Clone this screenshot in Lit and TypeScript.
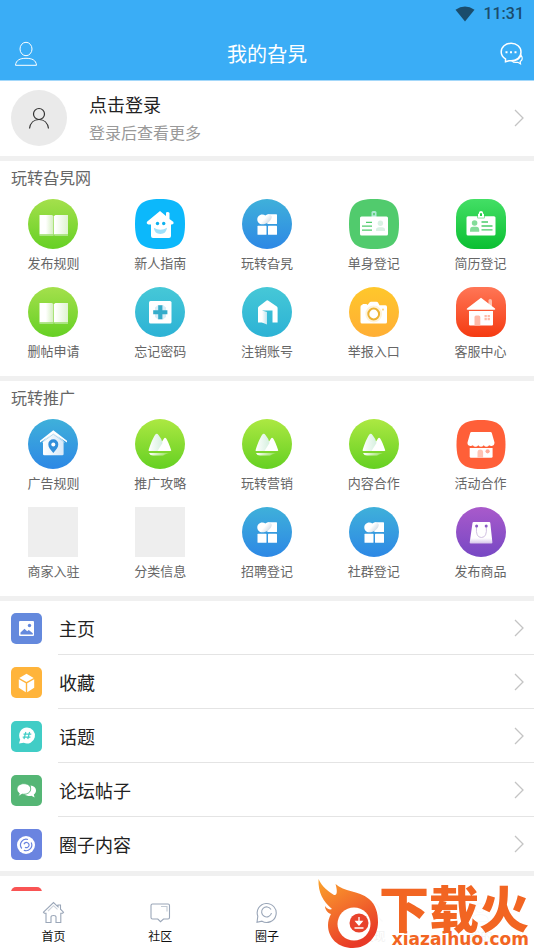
import { LitElement, html, css, svg } from "lit";
import { customElement, property } from "lit/decorators.js";

type Entry = { icon: string; label: string };

const tops: Entry[] = [
  { icon: "book", label: "发布规则" },
  { icon: "smile", label: "新人指南" },
  { icon: "tiles", label: "玩转旮旯" },
  { icon: "card", label: "单身登记" },
  { icon: "resume", label: "简历登记" },
  { icon: "book", label: "删帖申请" },
  { icon: "plus", label: "忘记密码" },
  { icon: "door", label: "注销账号" },
  { icon: "camera", label: "举报入口" },
  { icon: "cottage", label: "客服中心" },
];

const promos: Entry[] = [
  { icon: "pin", label: "广告规则" },
  { icon: "hills", label: "推广攻略" },
  { icon: "hills", label: "玩转营销" },
  { icon: "hills", label: "内容合作" },
  { icon: "shop", label: "活动合作" },
  { icon: "blank", label: "商家入驻" },
  { icon: "blank", label: "分类信息" },
  { icon: "tiles", label: "招聘登记" },
  { icon: "tiles", label: "社群登记" },
  { icon: "bag", label: "发布商品" },
];

const rows: Entry[] = [
  { icon: "picture", label: "主页" },
  { icon: "box", label: "收藏" },
  { icon: "topic", label: "话题" },
  { icon: "posts", label: "论坛帖子" },
  { icon: "circle", label: "圈子内容" },
];

const tabs: Entry[] = [
  { icon: "home", label: "首页" },
  { icon: "talk", label: "社区" },
  { icon: "ring", label: "圈子" },
  { icon: "find", label: "发现" },
  { icon: "me", label: "我的" },
];

const gradient = (id: string, from: string, to: string, flat = false) => svg`
  <linearGradient id=${id} x1="0" y1="0" x2=${flat ? 1 : 0} y2=${flat ? 0 : 1}>
    <stop offset="0" stop-color=${from}/><stop offset="1" stop-color=${to}/>
  </linearGradient>`;

const disc = svg`<circle cx="25" cy="25" r="25" fill="url(#bg)"/>`;
const squircle = svg`<path d="M25 0C44 0 50 6 50 25S44 50 25 50 0 44 0 25 6 0 25 0Z" fill="url(#bg)"/>`;
const softSquare = svg`<rect width="50" height="50" rx="18" fill="url(#bg)"/>`;

const badges: Record<string, unknown> = {
  blank: svg`<rect width="50" height="50" fill="#eee"/>`,
  book: svg`<defs>${gradient("bg", "#a4e04c", "#66d024")}
      <linearGradient id="l"><stop offset=".45" stop-color="#fff"/><stop offset="1" stop-color="#d3efbd"/></linearGradient>
      <linearGradient id="r"><stop offset=".1" stop-color="#fff"/><stop offset="1" stop-color="#dff3d0"/></linearGradient></defs>${disc}
    <path d="M11.500 16H24l1.500 1v18.500H11.500Z" fill="url(#l)"/>
    <path d="M26 17l1.500-1H40v19.500H26Z" fill="url(#r)"/>
    <path d="M11.500 35.500H40V37H27l-1-.7-1 .7H11.500Z" fill="#a9e481"/>`,
  smile: svg`<defs>${gradient("bg", "#0cb8fb", "#0cb8fb")}</defs>${squircle}
    <path d="M25 12 31 17V14q0-1 1.500-1T34.500 14v6L38.500 23q.7 2-1.500 2.500H36V37q0 2-2 2H18q-2 0-2-2V25.500H13.500Q11 25 12 22.800Z" fill="#fff"/>
    <circle cx="22.500" cy="24.500" r="1.700" fill="#0cb1ee"/><circle cx="28.700" cy="24.500" r="1.700" fill="#0cb1ee"/>
    <path d="M18.800 28.800q6.700 4 13.200 0-.7 6.200-6.600 6.200t-6.600-6.200Z" fill="#9fe0fa"/>`,
  tiles: svg`<defs>${gradient("bg", "#3fb0da", "#2d88e5")}
      <linearGradient id="h" x2="1" y2=".6"><stop offset=".55" stop-color="#fff"/><stop offset="1" stop-color="#ccd9e4"/></linearGradient></defs>${disc}
    <rect x="25.300" y="15.300" width="9.700" height="9.700" rx=".6" fill="#fff"/>
    <path d="M20.300 25.300c-3 0-5-2.200-5-4.800s2-5 5-5q2 0 3 1 1-1 3-1 3 0 3.500 2c0 4-5 7.800-9.500 7.800Z" fill="url(#h)"/>
    <rect x="15.500" y="26.800" width="9" height="9" rx=".6" fill="#fff"/><rect x="26" y="26.800" width="9" height="9" rx=".6" fill="#fff"/>`,
  card: svg`<defs>${gradient("bg", "#51cb6d", "#51cb6d")}</defs>${squircle}
    <path d="M22.500 18v-4.500q0-1.500 1.500-1.500h2q1.500 0 1.500 1.500V18Z" fill="#aee8d3"/><rect x="24.200" y="14" width="1.600" height="2.200" fill="#51cb6d"/>
    <rect x="11" y="17.500" width="28" height="19" rx="1.500" fill="#fff"/>
    <path d="M17 23.300h6M13 27.200h10M13 31.200h10" stroke="#51cb6d" stroke-width="1.300"/>
    <circle cx="31.400" cy="24.200" r="2.700" fill="#daf1e4"/><path d="M27 32v-1.200q0-2.600 3-2.600h3q3 0 3 2.600V32Z" fill="#daf1e4"/>`,
  resume: svg`<defs>${gradient("bg", "#43df65", "#0bbf32")}</defs>${softSquare}
    <rect x="10.500" y="17.300" width="29" height="19.200" rx="1.500" fill="#fff"/>
    <path d="M21.500 17h7v2.300h-7Z" fill="#24cf4a"/><path d="M22 18.700v-4h1V13.500q0-1.500 2-1.500t2 1.500v1.200h1v4Z" fill="#fff"/><path d="M24 17v-2.500q1-1.200 2 0V17Z" fill="#24cf4a"/>
    <circle cx="18.600" cy="24" r="2.800" fill="#83dc99"/><path d="M14 32.700v-1.500q0-3.400 3-3.400h3.200q3 0 3 3.400v1.500Z" fill="#83dc99"/>
    <path d="M25.500 23h6.500M25.500 27h11M25.500 30.800h11" stroke="#4bcd6b" stroke-width="1.300"/>`,
  plus: svg`<defs>${gradient("bg", "#46c8d7", "#2cb2d5")}</defs>${disc}
    <rect x="14" y="14" width="22.500" height="22.500" rx="1.500" fill="#fff"/>
    <path d="M20 20.500l3-2.500h5l3 2.500v9.500l-3 2.500h-5l-3-2.500Z" fill="#d9edf6"/>
    <path d="M23.200 18.300h4.200v5h5v4h-5v5h-4.200v-5h-5v-4h5Z" fill="#35acca"/>`,
  door: svg`<defs>${gradient("bg", "#46c8d7", "#2cb2d5")}${gradient("d", "#fff", "#bfe6f0", true)}</defs>${disc}
    <path d="M16 21q0-1 .8-1.500L24.600 13.500q.7-.5 1.400 0L34.800 19.500q.8.500.8 1.500V35.500H30.500V23.500H20.500V35.500H16Z" fill="#fff"/>
    <path d="M20 23.500 25 25V37.500L20 35.500Z" fill="url(#d)"/>`,
  camera: svg`<defs>${gradient("bg", "#ffc72b", "#ffae35")}</defs>${disc}
    <path d="M11.500 20q0-2 1.500-2l1-1h3.500l1 1 2-2.500q.5-.7 1.500-.7h5.500q1 0 1.500.7L30.500 18.300H36.500Q38 18.300 38 20v15q0 1.500-1.500 1.500h-23.500q-1.500 0-1.500-1.500Z" fill="#fff"/>
    <circle cx="24.700" cy="27" r="8.400" fill="#fff3d8"/><circle cx="24.700" cy="27" r="5.400" fill="#fff" stroke="#ecb334" stroke-width="2"/><circle cx="34" cy="22.600" r="1.100" fill="#ffd783"/>`,
  cottage: svg`<defs>${gradient("bg", "#ff7656", "#f53a11")}</defs>${softSquare}
    <path d="M32.500 20v-6.500q0-1.500 1.700-1.500t1.800 1.500V20Z" fill="#ffbfae"/>
    <path d="M25 10.700 39 21.500q.8 1-.5 1.200h-27q-1.500-.2-.5-1.200ZM13 24h24v13.500q0 1-1 1H14q-1 0-1-1Z" fill="#fff"/>
    <path d="M18.500 38.500V30q0-1.500 1.500-1.500h2.800q1.500 0 1.500 1.500v8.500ZM28.500 28h2.300v2.300h-2.300zM31.600 28h2.300v2.300h-2.300zM28.500 31h2.300v2.300h-2.300zM31.600 31h2.300v2.300h-2.300z" fill="#ffbaa8"/>`,
  pin: svg`<defs>${gradient("bg", "#3fb0da", "#2d88e5")}${gradient("s", "#fff", "#d8e9f8", true)}</defs>${disc}
    <path d="M15 22 25.300 13.500 35.600 22V35q0 1.300-1.300 1.300H16.300Q15 36.300 15 35Z" fill="url(#s)"/>
    <path d="M12 21.800 25.300 11.200 39 21.800v1.700L25.300 14.500 12 23.500Z" fill="#fff"/><path d="M14 23.500 25.300 15.200l11.300 8.300" fill="none" stroke="#a9d4ee" stroke-width=".8"/>
    <path d="M25.300 34c-3-3.500-5-5.700-5-8.700a5 5 0 0 1 10 0c0 3-2 5.200-5 8.700Z" fill="#328fdb"/><circle cx="25.300" cy="25.500" r="2" fill="#fff"/>`,
  hills: svg`<defs>${gradient("bg", "#ace842", "#65d022")}${gradient("m", "#fff", "#d6f0df", true)}${gradient("w", "#fff", "#93df55", true)}</defs>${disc}
    <path d="M25.500 25 29 19.500q1-1.500 2.200 0Q33 22 36.300 31.500L35.500 32H21Z" fill="#fff"/>
    <path d="M13.500 31.500C15 26 18 19 20 16q1.800-2.500 3.500 0Q27 20 27.500 24L22.500 32H14Z" fill="url(#m)"/>
    <path d="M14 34h20l-3.500 1.300L28 36.600H18q-3 0-4-2.600Z" fill="url(#w)"/>`,
  shop: svg`<path d="M25 1C43 1 49.500 7 49.500 25.500S43 50 25 50 .500 44 .500 25.500 7 1 25 1Z" fill="#ff5f38"/>
    <path d="M15.500 13h19q1 0 1.300 1L38.500 23.500q0 3-2.700 3.500-1.600.2-2.600-.7-1.300 1.500-2.800 1.500t-2.700-1.500q-1.200 1.500-2.700 1.500t-2.700-1.500q-1.200 1.500-2.800 1.500t-2.700-1.500q-1 .9-2.600.7-3-.5-2.700-3.500L14.200 14q.3-1 1.300-1Z" fill="#fff"/>
    <path d="M13.700 29h22.900V37.500q0 1.300-1.300 1.300H15q-1.300 0-1.300-1.300Z" fill="#fff"/>
    <path d="M21.500 38.800V33.500q0-3 2.800-3t2.800 3v5.300Z" fill="#ffc3b4"/><circle cx="31.600" cy="32.300" r="2.100" fill="#ffab98"/>`,
  bag: svg`<defs>${gradient("bg", "#a95acb", "#7748c4")}
      <linearGradient id="b" x2="0" y2="1"><stop offset=".75" stop-color="#fff"/><stop offset="1" stop-color="#d5c3ea"/></linearGradient></defs>${disc}
    <path d="M17.700 15H33.200q1 0 1.100 1L36.400 35.500q0 1-1 1H14.700q-1.100 0-1-1L16.500 16q.1-1 1.200-1Z" fill="url(#b)"/>
    <path d="M20.500 20q-1 10.500 4.900 10.500T30.300 20" fill="none" stroke="#cbb9dc" stroke-width=".9"/>
    <circle cx="20.600" cy="19" r="1.500" fill="#8a5ac4"/><circle cx="30.200" cy="19" r="1.500" fill="#8a5ac4"/>`,
};

const rowIcons: Record<string, unknown> = {
  picture: svg`<rect width="31" height="31" rx="5" fill="#6489dd"/><rect x="8" y="8" width="15" height="15" rx="1" fill="#fff"/>
    <circle cx="18.500" cy="12.500" r="1.700" fill="#6489dd"/><path d="M9.500 21.500v-2l4-3.800 2.700 2.500 1.600-1.200 4 3.200v1.300Z" fill="#6489dd"/>`,
  box: svg`<rect width="31" height="31" rx="5" fill="#ffb43b"/><path d="M15.500 6.800 22.700 11 15.500 15 8.300 11ZM7.800 12.200l7 4v9l-7-4.500ZM23.200 12.200l-7 4v9l7-4.500Z" fill="#fff"/>`,
  topic: svg`<rect width="31" height="31" rx="5" fill="#41cdc6"/><path d="M16 6.500a8 8 0 1 1-3.300 15.300L8 22.500l1.200-4A8 8 0 0 1 16 6.500Z" fill="#fff"/>
    <path d="M14.800 11 13 18.200M18.600 11l-1.800 7.200M12.500 13.200h7.800M11.700 16.200h7.700" stroke="#41cdc6" stroke-width="1.200" fill="none"/>`,
  posts: svg`<rect width="31" height="31" rx="5" fill="#55b675"/><path d="M19.500 10.500c3.200.3 5.500 2.300 5.500 5 0 1.700-.8 3-2.200 4l.8 3-3.200-1.700c-2.600.5-5 0-6.700-1.300 4.500-.4 7.800-4 5.800-9Z" fill="#fff"/>
    <path d="M12.700 8.700c4 0 7 2.200 7 5.200s-3 5.300-7 5.300l-1.600-.1L7.700 21.300l.6-3.100C6.800 17.200 6 15.700 6 14c0-3 3-5.300 6.700-5.300Z" fill="#fff" stroke="#55b675" stroke-width=".7"/>`,
  circle: svg`<rect width="31" height="31" rx="5" fill="#6a84e0"/><circle cx="15" cy="16" r="9" fill="#fff"/>
    <path d="M10.800 19.500a5.700 5.700 0 0 1 6.200-9M20.200 13.500a5.700 5.700 0 0 1-7.400 7.700M13 15.200a2.600 2.600 0 1 1 1 3" fill="none" stroke="#6a84e0" stroke-width="1.200"/>`,
};

const tabIcons: Record<string, unknown> = {
  home: svg`<path d="M1.500 11.200 11.500 1.500l4.500 4.300V4h2.500v4.200l3 3-.8 1H18.800V21.500H14V16q0-1.500-2.500-1.500T9 16v5.500H4V12.200H2.300Z"/><path d="M6 10l5.500-5.300 4 3.700" opacity=".5"/>`,
  talk: svg`<path d="M3.500 3H19q1.500 0 1.500 1.500v12q0 1.500-1.500 1.500h-4.500l-3 2.700-2.700-2.700H3.500Q2 18 2 16.500v-12Q2 3 3.500 3Z"/><path d="M12 5.500h6v5" opacity=".6"/>`,
  ring: svg`<path d="M2 21.300l.8-6A9.500 9.500 0 1 1 7 20.200Z"/><path d="M16 8.500A5 5 0 1 0 16.500 12"/>`,
  find: svg`<circle cx="10" cy="10" r="7.500"/><path d="M15.500 15.500l5 5"/>`,
  me: svg`<circle cx="11" cy="7" r="4.500"/><path d="M2.500 20.500q0-7 8.500-7t8.500 7Z"/>`,
};

const chevron = html`<svg class="chevron" viewBox="0 0 10 18"><path d="M1 1l8 8-8 8"/></svg>`;

/* Each badge owns its shadow root, so the gradient ids stay local to it. */
@customElement("round-badge")
class RoundBadge extends LitElement {
  @property() name = "";
  static styles = css`
    :host, svg { display: block; width: 50px; height: 50px; }
  `;
  render() {
    return html`<svg viewBox="0 0 50 50" aria-hidden="true">${badges[this.name]}</svg>`;
  }
}

@customElement("site-mark")
class SiteMark extends LitElement {
  static styles = css`
    :host { display: flex; height: 72px; color: #f26522; background: linear-gradient(90deg, #fff0, #fffffff0 20px); }
    .flame { width: 62px; height: 72px; flex: none; }
    .words { display: flex; flex-direction: column; align-items: flex-end; padding-top: 4px; }
    .name { font: 900 50px/50px "Noto Sans CJK SC", sans-serif; white-space: nowrap; }
    .site { font: 700 17px/16px "DejaVu Sans", sans-serif; white-space: nowrap; }
  `;
  render() {
    return html`<svg class="flame" viewBox="0 0 62 72" aria-hidden="true">
        <defs><linearGradient id="f" x2=".5" y2="1"><stop offset="0" stop-color="#fba32c"/><stop offset=".55" stop-color="#f26a2b"/><stop offset="1" stop-color="#e83a27"/></linearGradient></defs>
        <path d="M1.500 2C5 10 11 14 17 18c4 1 3-6 1.500-11C27 15 41 13 52 22c7 6 9 14 9 23 0 15-11 26-25 26-15 0-25-10-25-23 0-4 1-7 3-11-4-1-6-5-6-8 2 3 5 4 7 3C6 24 1 16 1.500 2Z" fill="url(#f)"/>
        <circle cx="37" cy="47" r="16.500" fill="#fff"/><circle cx="42" cy="46" r="9.500" fill="#e8432c"/>
        <path d="M42 40v5M39 44.500l3 3.500 3-3.500ZM37.500 51h9" fill="#fff" stroke="#fff" stroke-width="1.300"/>
      </svg>
      <div class="words"><span class="name">下载火</span><span class="site">xiazaihuo.com</span></div>`;
  }
}

@customElement("app-root")
class AppRoot extends LitElement {
  static styles = css`
    :host {
      display: flex; flex-direction: column; height: 100vh; position: relative; overflow: hidden;
      background: #f0f0f0; color: #222;
      font-family: "Noto Sans CJK SC", sans-serif;
    }
    * { box-sizing: border-box; }
    button { border: 0; margin: 0; padding: 0; background: none; font: inherit; color: inherit; cursor: pointer; }
    a { color: inherit; text-decoration: none; }
    h1, h2, p, ul { margin: 0; padding: 0; font-weight: 400; list-style: none; }
    svg { display: block; flex: none; }

    header { flex: none; background: #3aadf6; border-bottom: 1px solid #a4d8fa; }
    .status { display: flex; justify-content: flex-end; align-items: center; gap: 8px; height: 28px; padding: 0 10px; color: #1a4c6c; font: 500 16px/28px Roboto, sans-serif; }
    .wifi { width: 20px; height: 16px; }
    .bar { display: grid; grid-template-columns: 32px 1fr 32px; align-items: center; height: 52px; padding: 0 10px; color: #fff; }
    .bar h1 { text-align: center; font-size: 20px; line-height: 28px; }
    .bar button { display: flex; justify-content: center; }
    .bar svg { width: 24px; height: 26px; fill: none; stroke: #fff; }
    .bar button:last-child { justify-content: flex-end; }

    main { flex: 1; min-height: 0; overflow: hidden; display: flex; flex-direction: column; gap: 5px; }
    main > * { flex: none; background: #fff; }

    .login { display: flex; align-items: center; height: 75px; padding: 0 10px 2px 11px; }
    .avatar { display: grid; place-items: center; width: 56px; height: 56px; border-radius: 50%; background: #eaeaea; }
    .avatar svg { width: 22px; height: 22px; fill: none; stroke: #333; stroke-width: 1.2; }
    .who { flex: 1; margin-left: 22px; }
    .who strong { display: block; font-weight: 400; font-size: 18px; line-height: 28px; }
    .who span { display: block; font-size: 16px; line-height: 28px; color: #999; }
    .chevron { width: 10px; height: 18px; fill: none; stroke: #c4c4c4; stroke-width: 1.3; }

    .group { height: 215px; }
    .group h2 { padding: 4px 11px; font-size: 16px; line-height: 24px; color: #666; }
    .group ul { display: grid; grid-template-columns: repeat(5, 1fr); row-gap: 14px; padding-top: 6px; }
    .tile { display: flex; flex-direction: column; align-items: center; gap: 4px; font-size: 13px; line-height: 20px; color: #666; }

    .row { display: flex; align-items: center; height: 54px; padding-left: 11px; }
    .row > svg { width: 31px; height: 31px; }
    .row span { flex: 1; display: flex; align-items: center; justify-content: space-between; height: 54px; margin-left: 16px; padding: 0 10px 0 1px; border-bottom: 1px solid #e4e4e4; font-size: 18px; }
    li:last-child .row span { border-bottom: 0; }
    .more { padding: 11px; }
    .more div { width: 31px; height: 31px; border-radius: 5px; background: #f95454; }

    nav { flex: none; display: grid; grid-template-columns: repeat(5, 1fr); height: 58px; background: #fff; }
    .tab { display: flex; flex-direction: column; align-items: center; padding-top: 10px; gap: 3px; font-size: 12px; line-height: 18px; color: #111; }
    .tab svg { width: 23px; height: 23px; fill: none; stroke: #9aa6b8; stroke-width: 1.1; }

    site-mark { position: absolute; right: 5px; bottom: 0; }
  `;

  group(title: string, items: Entry[]) {
    return html`<section class="group"><h2>${title}</h2><ul>
      ${items.map((i) => html`<li><a class="tile" href="#"><round-badge name=${i.icon}></round-badge>${i.label}</a></li>`)}
    </ul></section>`;
  }

  render() {
    return html`
      <header>
        <div class="status">
          <svg class="wifi" viewBox="0 0 20 16"><path d="M.500 3.800Q10-3 19.500 3.800L10 15.500Z" fill="currentColor"/></svg>11:31
        </div>
        <div class="bar">
          <button aria-label="个人"><svg viewBox="0 0 24 26"><ellipse cx="12" cy="8" rx="6" ry="6.700"/><path d="M1.500 24.300C2 19 6 17.300 12 17.300s10 1.700 10.500 7Z"/></svg></button>
          <h1>我的旮旯</h1>
          <button aria-label="消息"><svg viewBox="0 0 24 26"><path d="M5.500 20.800v-3C2.500 16 1.200 13.700 1.200 11c0-5 4.300-8.700 9.900-8.700S21 6 21 11s-4.300 8.800-9.900 8.800H9Z" stroke-width="1.500"/><path d="M21 14c2 3 1.500 5-.8 6.500l.3 2.300-2.700-1.500c-3 .5-5-.3-6-1.500 4.500 0 8-2 9.200-5.800Z" stroke-width="1.200"/><path d="M5.500 11.300h2M10 11.300h2M14.500 11.300h2" stroke-width="2"/></svg></button>
        </div>
      </header>
      <main>
        <a class="login" href="#">
          <div class="avatar"><svg viewBox="0 0 22 22"><circle cx="11" cy="7" r="5.500"/><path d="M1.500 21.500c.8-5.500 4.500-9 9.500-9s8.700 3.500 9.500 9"/></svg></div>
          <div class="who"><strong>点击登录</strong><span>登录后查看更多</span></div>
          ${chevron}
        </a>
        ${this.group("玩转旮旯网", tops)}
        ${this.group("玩转推广", promos)}
        <ul>
          ${rows.map((r) => html`<li><a class="row" href="#"><svg viewBox="0 0 31 31">${rowIcons[r.icon]}</svg><span>${r.label}${chevron}</span></a></li>`)}
        </ul>
        <div class="more"><div></div></div>
      </main>
      <nav>
        ${tabs.map((t) => html`<a class="tab" href="#"><svg viewBox="0 0 23 23">${tabIcons[t.icon]}</svg>${t.label}</a>`)}
      </nav>
      <site-mark></site-mark>`;
  }
}
